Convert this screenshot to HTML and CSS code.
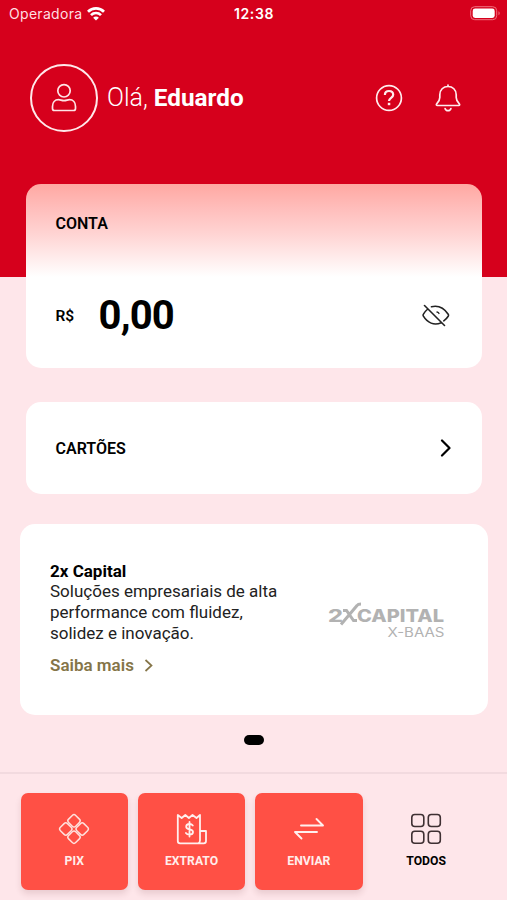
FILE: index.html
```html
<!DOCTYPE html>
<html lang="pt-BR">
<head>
<meta charset="utf-8">
<meta name="viewport" content="width=device-width, initial-scale=1">
<title>Conta</title>
<link rel="stylesheet" href="styles.css">
</head>
<body>
<div class="screen">
  <header class="hero">
    <div class="status">
      <div class="carrier">
        <span>Operadora</span>
        <svg width="18" height="14" viewBox="0 0 18 14" fill="none" stroke="#fff" stroke-width="2.700"><path d="M1 4.8C5.5.3 12.500.3 17 4.800M4 8.100c2.800-2.800 7.200-2.800 10 0"/><path d="M9 13.600 6.100 10.700c1.600-1.500 4.200-1.500 5.800 0z" fill="#fff" stroke="none"/></svg>
      </div>
      <span class="clock">12:38</span>
      <svg class="battery" width="31" height="15" viewBox="0 0 31 15"><rect x=".7" y=".7" width="26" height="13" rx="4" fill="none" stroke="#f0707f" stroke-width="1"/><rect x="2.700" y="2.500" width="22" height="9.500" rx="2.400" fill="#fff"/><path d="M28.500 5.200c1.600.7 1.600 3.400 0 4.100z" fill="#f0707f"/></svg>
    </div>
    <div class="greeting">
      <div class="avatar">
        <svg width="26" height="30" viewBox="0 0 26 30" fill="none" stroke="#ffe4e6" stroke-width="1.700"><circle cx="13" cy="7.800" r="6.200"/><path d="M1.500 25.500v-2c0-4 2.500-6.800 6-6.800 2 0 3 .9 5.500.9s3.500-.9 5.500-.9c3.500 0 6 2.800 6 6.800v2c0 1.200-.8 2-2 2h-19c-1.200 0-2-.8-2-2z"/></svg>
      </div>
      <div class="hello">Olá, <b>Eduardo</b></div>
      <svg class="help" width="28" height="28" viewBox="0 0 28 28" fill="none" stroke="#ffecee"><circle cx="14" cy="14" r="12.400" stroke-width="1.700"/><path d="M9.900 11c0-2.500 1.700-4 4.100-4s4.200 1.500 4.200 3.700c0 3.300-4.200 3-4.200 6.300" stroke-width="2.200"/><path d="M12.800 18.800h2.500v2.400h-2.500z" fill="#ffecee" stroke="none"/></svg>
      <svg class="bell" width="26" height="28" viewBox="0 0 26 28" fill="none" stroke="#ffecee" stroke-width="1.700" stroke-linecap="round" stroke-linejoin="round"><path d="M13 1v1.500M2.300 21.500c-.9 0-1.300-1-.6-1.700 2-2 3.100-3.500 3.100-6.300v-2.700C4.800 5.700 8.300 2.500 13 2.500s8.200 3.200 8.200 8.300v2.700c0 2.800 1.100 4.300 3.100 6.300.7.700.3 1.700-.6 1.700zM10.100 24.500c.8 2.900 5 2.900 5.800 0"/></svg>
    </div>
  </header>

  <main class="content">
    <section class="card account">
      <h2 class="label">CONTA</h2>
      <div class="balance">
        <span class="currency">R$</span>
        <span class="amount">0,00</span>
        <svg width="28" height="24" viewBox="0 0 28 24" fill="none" stroke="#222" stroke-width="1.600" stroke-linecap="round"><path d="M2.500 1.500 22.500 21.500M9.500 2.700c6.800-1.600 12.700 1.500 16.700 7.500.4.700.4 1.300 0 2-1.200 1.900-2.700 3.400-4.400 4.600M5.300 5.500C3.700 6.800 2.400 8.300 1.400 10.200c-.4.700-.4 1.300 0 2 4 6.600 10.600 9.700 17.800 6.500"/><path d="M15 8c1.200.2 1.700.6 2 1.500" stroke-width="1.300"/></svg>
      </div>
    </section>

    <section class="card cards">
      <h2 class="label">CARTÕES</h2>
      <svg width="12" height="18" viewBox="0 0 12 18" fill="none" stroke="#000" stroke-width="2.200" stroke-linecap="round" stroke-linejoin="round"><path d="M2 1.500 9.500 9 2 16.500"/></svg>
    </section>

    <section class="card promo">
      <div class="pitch">
        <h3>2x Capital</h3>
        <p>Soluções empresariais de alta<br>performance com fluidez,<br>solidez e inovação.</p>
        <div class="more"><span>Saiba mais</span><svg width="9" height="13" viewBox="0 0 9 13" fill="none" stroke="#857548" stroke-width="1.700"><path d="M1.500 1 7.500 6.500 1.500 12"/></svg></div>
      </div>
      <svg class="brand" width="118" height="38" viewBox="0 0 118 38">
        <text class="brand-bold" x="0" y="20" textLength="15" lengthAdjust="spacingAndGlyphs">2</text>
        <path d="M13 22.500 29 3.500Q30 2 33 2M15 8.500h3.500L25.500 18.600H29" fill="none" stroke="#b2b2b2" stroke-width="3"/>
        <text class="brand-bold" x="29" y="20" textLength="87" lengthAdjust="spacingAndGlyphs">CAPITAL</text>
        <text class="brand-light" x="59.500" y="34.500" textLength="57" lengthAdjust="spacingAndGlyphs">X-BAAS</text>
      </svg>
    </section>
    <div class="pager"></div>
  </main>

  <nav class="actions">
    <div class="action filled">
      <svg width="32" height="32" viewBox="0 0 32 32" fill="none" stroke="#ffe0dc" stroke-width="1.500"><g transform="rotate(45 16 16)"><rect x="5.200" y="5.200" width="10" height="10" rx="2.400"/><rect x="16.800" y="5.200" width="10" height="10" rx="2.400"/><rect x="5.200" y="16.800" width="10" height="10" rx="2.400"/><rect x="16.800" y="16.800" width="10" height="10" rx="2.400"/></g></svg>
      <span>PIX</span>
    </div>
    <div class="action filled">
      <svg width="32" height="32" viewBox="0 0 32 32" fill="none" stroke="#fff0ee" stroke-width="1.800" stroke-linejoin="round" stroke-linecap="round"><path d="M1.800 2v26c0 1.500.8 2.300 2.300 2.300h23.600c1.500 0 2.300-.8 2.300-2.300V18h-6V2l-3.500 3L16.500 2l-3.600 3-3.600-3-3.600 3zM24 18v9.500c0 1.600-.7 2.400-1.700 2.800"/><path d="M16.800 12.500c-.7-1-1.800-1.500-3.300-1.500-2 0-3.300 1-3.300 2.700 0 3.800 6.800 1.700 6.800 5.300 0 1.700-1.400 2.700-3.500 2.700-1.600 0-2.900-.6-3.600-1.700M13.500 9v14.500"/></svg>
      <span>EXTRATO</span>
    </div>
    <div class="action filled">
      <svg width="32" height="32" viewBox="0 0 32 32" fill="none" stroke="#fff0ee" stroke-width="1.900" stroke-linecap="round" stroke-linejoin="round"><path d="M8 12.500h22L23.500 6M24 19H2l6.500 6.500"/></svg>
      <span>ENVIAR</span>
    </div>
    <div class="action">
      <svg width="32" height="32" viewBox="0 0 32 32" fill="none" stroke="#3f3033" stroke-width="1.600"><rect x="1.800" y="1.500" width="12" height="12" rx="3"/><rect x="18.300" y="1.500" width="12" height="12" rx="3"/><rect x="1.800" y="18.300" width="12" height="12" rx="3"/><rect x="18.300" y="18.300" width="12" height="12" rx="3"/></svg>
      <span>TODOS</span>
    </div>
  </nav>
</div>
</body>
</html>
```

FILE: styles.css
```css
* { box-sizing: border-box; }
body { margin: 0; font-family: Roboto, "Liberation Sans", sans-serif; color: #000; }
h2, h3, p { margin: 0; }
svg { display: block; flex: none; }
.screen { width: 507px; height: 900px; overflow: hidden; background: #fee6ea; display: flex; flex-direction: column; }

.hero { height: 277px; flex: none; background: #d6001c; color: #fff; }
.status { display: grid; grid-template-columns: 1fr auto 1fr; align-items: center; height: 27px; padding: 0 6px 0 9px; font-family: Inter, sans-serif; font-size: 14px; }
.carrier { display: flex; align-items: center; gap: 5px; color: #ffdfe2; letter-spacing: .3px; }
.clock { margin-right: 2px; font-weight: 600; letter-spacing: .6px; font-size: 14px; }
.battery { justify-self: end; }
.greeting { display: flex; align-items: center; padding: 37px 46px 0 30px; }
.avatar { width: 68px; height: 68px; border: 2px solid #ffe8ea; border-radius: 50%; display: flex; align-items: center; justify-content: center; }
.hello { margin-left: 9px; font-size: 25px; line-height: 30px; font-weight: 300; white-space: nowrap; }
.hello b { font-weight: 700; font-size: 24.3px; }
.help { margin-left: auto; }
.bell { margin-left: 32px; }

.content { margin-top: -93px; flex: none; height: 587.5px; padding: 0 25px 0 26px; }
.card { background: #fff; border-radius: 15px; }
.account { height: 184px; padding: 30px 32px 0 29.5px; background: linear-gradient(#ffa8a2 0, #ffbebc 25px, #ffd4d3 50px, #fff 93px); }
.label { font-size: 16px; line-height: 20px; font-weight: 600; }
.balance { display: flex; align-items: center; margin-top: 60px; height: 44px; }
.currency { width: 43px; font-size: 15.5px; font-weight: 600; }
.amount { flex: 1; font-size: 40px; line-height: 44px; font-weight: 700; letter-spacing: -.8px; }
.cards { margin-top: 34px; height: 92px; padding: 0 30px 0 29.5px; display: flex; align-items: center; justify-content: space-between; }
.cards .label { padding-top: 1px; }
.promo { margin: 29.5px -6px 0; height: 191.5px; padding: 37px 42px 0 30px; display: flex; justify-content: space-between; }
.pitch { font-size: 17px; line-height: 20.7px; color: #222; white-space: nowrap; }
.pitch h3 { font-size: 17px; line-height: 20.7px; font-weight: 700; color: #000; }
.more { display: flex; align-items: center; gap: 10px; margin-top: 12px; color: #857548; font-weight: 600; }
.brand { margin-top: 41px; }
.brand-bold { font-family: Inter, sans-serif; font-weight: 800; font-size: 17px; fill: #b2b2b2; }
.brand-light { font-family: Inter, sans-serif; font-weight: 400; font-size: 13px; fill: #b2b2b2; }
.pager { width: 20px; height: 10.5px; margin: 19.5px auto 0; border-radius: 6px; background: #000; }

.actions { flex: 1; border-top: 2px solid #f2dadf; display: grid; grid-template-columns: repeat(4, 107.5px); gap: 9.8px; padding: 19px 20.5px 0; }
.action { height: 97.5px; border-radius: 7px; padding-top: 20px; display: flex; flex-direction: column; align-items: center; gap: 9px; font-size: 12.2px; line-height: 15px; font-weight: 700; }
.filled { background: #ff5045; color: #ffeeec; box-shadow: 0 4px 6px rgba(90, 30, 40, .13); }
```
